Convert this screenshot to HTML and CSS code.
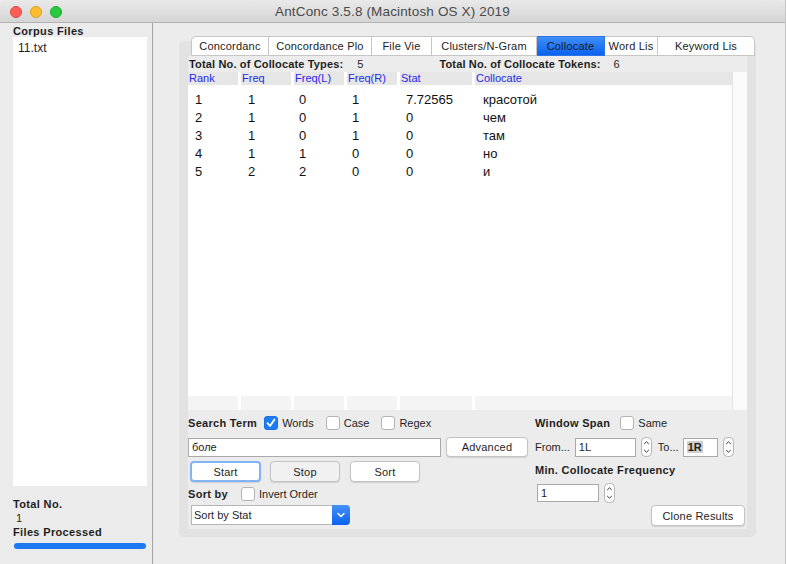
FILE: index.html
```html
<!DOCTYPE html>
<html>
<head>
<meta charset="utf-8">
<link rel="stylesheet" href="styles.css">
</head>
<body>
<div class="window">
  <div class="titlebar">
    <div class="lights"><span class="light red"></span><span class="light yellow"></span><span class="light green"></span></div>
    <div class="title">AntConc 3.5.8 (Macintosh OS X) 2019</div>
  </div>
  <div class="main">
    <div class="left">
      <div class="blabel">Corpus Files</div>
      <div class="filelist"><div class="file">11.txt</div></div>
      <div class="blabel total">Total No.</div>
      <div class="count">1</div>
      <div class="blabel fp">Files Processed</div>
      <div class="progress"></div>
    </div>
    <div class="right">
      <div class="tabpane">
        <div class="tabs">
          <div class="tab w1">Concordanc</div>
          <div class="tab w2">Concordance Plo</div>
          <div class="tab w3">File Vie</div>
          <div class="tab w4">Clusters/N-Gram</div>
          <div class="tab w5 active">Collocate</div>
          <div class="tab w6">Word Lis</div>
          <div class="tab w7">Keyword Lis</div>
        </div>
        <div class="content">
          <div class="stats">
            <span class="b">Total No. of Collocate Types:</span><span class="sv1">5</span>
            <span class="b st2">Total No. of Collocate Tokens:</span><span class="sv2">6</span>
          </div>
          <div class="tablewrap">
            <div class="table">
              <div class="thead">
                <div>Rank</div><div>Freq</div><div>Freq(L)</div><div>Freq(R)</div><div>Stat</div><div>Collocate</div>
              </div>
              <div class="tbody">
                <div class="row"><div>1</div><div>1</div><div>0</div><div>1</div><div>7.72565</div><div>красотой</div></div>
                <div class="row"><div>2</div><div>1</div><div>0</div><div>1</div><div>0</div><div>чем</div></div>
                <div class="row"><div>3</div><div>1</div><div>0</div><div>1</div><div>0</div><div>там</div></div>
                <div class="row"><div>4</div><div>1</div><div>1</div><div>0</div><div>0</div><div>но</div></div>
                <div class="row"><div>5</div><div>2</div><div>2</div><div>0</div><div>0</div><div>и</div></div>
              </div>
              <div class="tfoot"><div></div><div></div><div></div><div></div><div></div><div></div></div>
            </div>
            <div class="scroll"></div>
          </div>
          <div class="controls">
            <div class="lcol">
              <div class="r1">
                <span class="b st">Search Term</span>
                <span class="cb checked"><svg width="14" height="14" viewBox="0 0 14 14"><path d="M3.5 7.2 L6 10 L10.5 3.5" fill="none" stroke="#fff" stroke-width="1.8" stroke-linecap="round" stroke-linejoin="round"/></svg></span>
                <span class="cbl">Words</span>
                <span class="cb"></span><span class="cbl">Case</span>
                <span class="cb"></span><span class="cbl">Regex</span>
              </div>
              <div class="r2">
                <div class="input search">боле</div>
                <div class="btn adv">Advanced</div>
              </div>
              <div class="r3">
                <div class="btn start">Start</div>
                <div class="btn stop">Stop</div>
                <div class="btn sort">Sort</div>
              </div>
              <div class="r4">
                <span class="b sb">Sort by</span>
                <span class="cb"></span><span class="cbl">Invert Order</span>
              </div>
              <div class="r5">
                <div class="select"><span class="seltext">Sort by Stat</span><span class="selbtn"><svg width="18" height="20" viewBox="0 0 18 20"><path d="M6 8.5 L9 11.5 L12 8.5" fill="none" stroke="#fff" stroke-width="1.5" stroke-linecap="round" stroke-linejoin="round"/></svg></span></div>
              </div>
            </div>
            <div class="rcol">
              <div class="r1">
                <span class="b ws">Window Span</span>
                <span class="cb"></span><span class="cbl">Same</span>
              </div>
              <div class="r2">
                <span class="lbl">From...</span>
                <div class="input from">1L</div>
                <span class="stepper"><svg width="11" height="20" viewBox="0 0 11 20"><rect x="0.5" y="0.5" width="10" height="19" rx="4" fill="#fff" stroke="#b4b4b4"/><path d="M3.2 7 L5.5 4.8 L7.8 7 M3.2 13 L5.5 15.2 L7.8 13" fill="none" stroke="#333" stroke-width="1"/></svg></span>
                <span class="lbl to">To...</span>
                <div class="input toin"><span class="sel">1R</span></div>
                <span class="stepper"><svg width="11" height="20" viewBox="0 0 11 20"><rect x="0.5" y="0.5" width="10" height="19" rx="4" fill="#fff" stroke="#b4b4b4"/><path d="M3.2 7 L5.5 4.8 L7.8 7 M3.2 13 L5.5 15.2 L7.8 13" fill="none" stroke="#333" stroke-width="1"/></svg></span>
              </div>
              <div class="r3b"><span class="b">Min. Collocate Frequency</span></div>
              <div class="r4b">
                <div class="input minf">1</div>
                <span class="stepper"><svg width="11" height="20" viewBox="0 0 11 20"><rect x="0.5" y="0.5" width="10" height="19" rx="4" fill="#fff" stroke="#b4b4b4"/><path d="M3.2 7 L5.5 4.8 L7.8 7 M3.2 13 L5.5 15.2 L7.8 13" fill="none" stroke="#333" stroke-width="1"/></svg></span>
              </div>
              <div class="r5b"><div class="btn clone">Clone Results</div></div>
            </div>
          </div>
        </div>
      </div>
    </div>
  </div>
</div>
</body>
</html>
```
FILE: styles.css
```css
* { box-sizing: border-box; }
html, body { margin: 0; padding: 0; }
body {
  width: 786px; height: 564px; overflow: hidden;
  background: #ececec;
  font-family: "Liberation Sans", Arial, sans-serif;
  font-size: 11px; color: #1e1e1e;
}
.window { width: 786px; height: 564px; background: #ececec; border-right: 1px solid #c4c4c4; }
.titlebar {
  height: 23px; position: relative;
  background: linear-gradient(#e9e9e9, #d5d5d5);
  border-bottom: 1px solid #b3b3b3;
  display: flex; align-items: center; justify-content: center;
  border-radius: 5px 5px 0 0;
}
.lights { position: absolute; left: 10px; top: 6px; display: flex; gap: 8px; }
.light { width: 12px; height: 12px; border-radius: 50%; display: block; }
.red { background: #fc5f57; border: 1px solid #de463e; }
.yellow { background: #fdbc2e; border: 1px solid #de9f1a; }
.green { background: #28c840; border: 1px solid #1aab29; }
.title { font-size: 13.5px; color: #4a4a4a; letter-spacing: 0.15px; padding-top: 1px; }

.main { display: flex; height: 541px; }
.left {
  width: 153px; border-right: 1px solid #a3a3a3;
  padding: 2px 5px 0 13px;
  background: #ebebeb;
}
.blabel { font-weight: bold; font-size: 11px; line-height: 12px; letter-spacing: 0.35px; }
.filelist { height: 449px; background: #fff; padding: 4px 5px; }
.file { font-size: 12px; line-height: 14px; }
.total { margin-top: 11px; line-height: 14px; }
.count { padding-left: 3px; line-height: 14px; font-size: 11px; }
.fp { line-height: 14px; }
.progress { margin-top: 4px; height: 6px; width: 132px; margin-left: 1px; border-radius: 3px; background: #1c79f2; }

.right { flex: 1; padding: 18px 0 0 26px; }
.tabpane {
  width: 577px; height: 496px;
  background: #e2e2e2; border-radius: 5px;
}
.tabs { display: flex; margin-left: 12px; position: relative; top: -5px; height: 20px; margin-bottom: -5px; }
.tab {
  height: 20px; background: #fff;
  border: 1px solid #c6c6c6; border-left: none;
  display: flex; align-items: center; justify-content: center;
  font-size: 11px; color: #222; letter-spacing: 0.2px; white-space: nowrap;
}
.tab:first-child { border-left: 1px solid #c6c6c6; border-radius: 5px 0 0 0; }
.tab:last-child { border-radius: 0 5px 0 0; }
.w1 { width: 78px; }
.w2 { width: 103px; }
.w3 { width: 60px; }
.w4 { width: 105px; }
.w5 { width: 68px; }
.w6 { width: 53px; }
.w7 { width: 97px; }
.tab.active { background: linear-gradient(#3f8ff8, #0a62f0); border-color: #2f74e6; color: #1a1a1a; }

.content { margin: 0 9px; height: 473px; background: #ececec; }
.b { font-weight: bold; letter-spacing: 0.3px; }
.stats { height: 16px; line-height: 16px; padding-left: 1px; display: flex; }
.stats .b { letter-spacing: 0.15px; }
.sv1 { margin-left: 14px; }
.st2 { margin-left: 76px; }
.sv2 { margin-left: 13px; }

.tablewrap { display: flex; height: 338px; background: #fff; }
.table { width: 544px; display: flex; flex-direction: column; }
.thead, .tfoot, .row { display: grid; grid-template-columns: 50px 50px 50px 50px 72px 1fr; column-gap: 3px; }
.thead { height: 13px; }
.thead div { background: #e6e6e6; color: #2727e8; font-size: 11px; line-height: 13px; padding-left: 1px; }
.tbody { flex: 1; padding-top: 5px; margin-top: 1px; }
.row { height: 18px; line-height: 18px; font-size: 13px; color: #111; }
.row div { padding-left: 7px; }
.row div:nth-child(3), .row div:nth-child(4) { padding-left: 5px; }
.row div:nth-child(5) { padding-left: 6px; }
.row div:nth-child(6) { padding-left: 8px; }
.tfoot { height: 14px; }
.tfoot div { background: #f4f4f4; }
.scroll { flex: 1; background: #fafafa; border-left: 1px solid #e4e4e4; }

.controls { display: flex; height: 119px; }
.lcol { width: 347px; }
.rcol { flex: 1; }
.r1 { margin-top: 6px; height: 14px; display: flex; align-items: center; }
.cb { width: 14px; height: 14px; border: 1px solid #b2b2b2; border-radius: 3px; background: #fff; display: inline-block; flex: none; }
.cb.checked { background: #1b7cf4; border-color: #1b6fe0; }
.cb svg { display: block; margin: -1px; }
.cbl { margin-left: 4px; margin-right: 13px; }
.lcol .r1 .cbl { margin-right: 12px; }
.st { margin-right: 7px; }
.r2 { margin-top: 7px; height: 20px; display: flex; align-items: center; }
.input { height: 19px; background: #fff; border: 1px solid #a9a9a9; line-height: 17px; padding-left: 3px; font-size: 11px; }
.search { width: 253px; }
.btn {
  background: #fff; border: 1px solid #c3c3c3; border-radius: 4px;
  box-shadow: 0 1px 1px rgba(0,0,0,0.12);
  display: flex; align-items: center; justify-content: center;
  font-size: 11px; letter-spacing: 0.2px;
}
.adv { width: 82px; height: 20px; margin-left: 5px; }
.r3 { margin-top: 4px; height: 21px; display: flex; padding-left: 2px; }
.start { width: 71px; height: 21px; border: 2px solid #80b4f7; }
.stop { width: 70px; height: 21px; margin-left: 9px; background: #f1f1f1; }
.sort { width: 70px; height: 21px; margin-left: 10px; }
.r4 { margin-top: 5px; height: 14px; display: flex; align-items: center; }
.sb { margin-right: 13px; }
.r5 { margin-top: 4px; padding-left: 3px; }
.select { width: 159px; height: 20px; display: flex; background: #fff; border: 1px solid #b5b5b5; border-right: none; border-radius: 0 4px 4px 0; }
.seltext { flex: 1; line-height: 18px; padding-left: 2px; }
.selbtn { width: 18px; height: 20px; margin-top: -1px; background: linear-gradient(#4592f8, #0a62ee); border-radius: 0 4px 4px 0; }
.selbtn svg { display: block; }

.ws { margin-right: 10px; }
.rcol .r2 { margin-top: 7px; }
.from { width: 61px; margin-left: 5px; }
.stepper { margin-left: 5px; display: block; height: 20px; }
.stepper svg { display: block; }
.to { margin-left: 6px; }
.toin { width: 35px; margin-left: 4px; }
.sel { background: #cfcfcf; font-weight: bold; padding: 0 1px; }
.r3b { margin-top: 6px; height: 14px; line-height: 14px; }
.r4b { margin-top: 6px; display: flex; align-items: center; padding-left: 2px; }
.minf { width: 62px; height: 18px; line-height: 16px; }
.r5b { margin-top: 2px; display: flex; justify-content: flex-end; padding-right: 2px; }
.clone { width: 94px; height: 21px; }
```
